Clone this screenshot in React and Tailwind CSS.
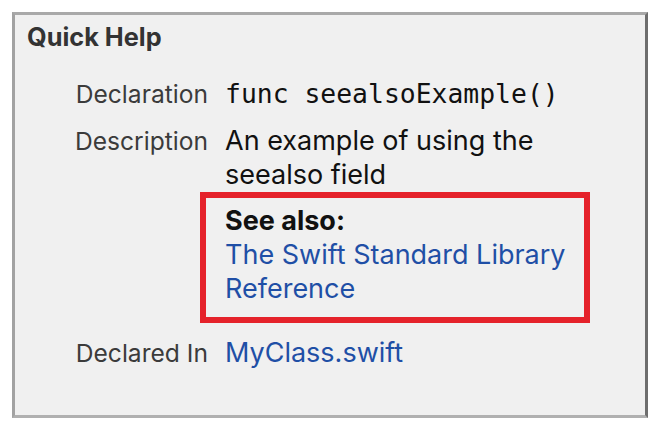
import React from 'react'

const sans = { fontFamily: 'Inter, "Liberation Sans", sans-serif' }
const mono = { fontFamily: '"DejaVu Sans Mono", monospace' }

// Label column: right-aligned, smaller grey text
const Label = ({ children }) => (
  <div className="text-right text-[24.6px] text-[#3b3b3b] pr-[17px]">{children}</div>
)

const App = () => {
  return (
    <div className="w-[660px] h-[430px] bg-white p-[12px]" style={sans}>
      <div className="h-[406px] bg-[#f0f0f0] border-[3px] border-t-[#a9a9a9] border-l-[#a2a2a2] border-r-[#6e6e6e] border-b-[#b0b0b0] leading-[34px]">
        {/* Title */}
        <div className="pl-[12px] pt-[5px] text-[25.3px] font-bold text-[#333333]">Quick Help</div>

        {/* Rows */}
        <div className="mt-[23px] grid grid-cols-[210px_1fr] items-baseline gap-y-[13px] text-[27px]">
          <Label>Declaration</Label>
          <div className="text-[#111111] text-[26.4px]" style={mono}>
            func seealsoExample()
          </div>

          <Label>Description</Label>
          <div className="text-[#111111]">
            <div>An example of using the</div>
            <div>seealso field</div>
            <div className="-ml-[25px] w-[390px] border-[6px] border-[#e5222b] pl-[19px] pt-[6px] pb-[11px]">
              <div className="font-bold">See also:</div>
              <div className="text-[#1f4fa6]">The Swift Standard Library</div>
              <div className="text-[#1f4fa6]">Reference</div>
            </div>
          </div>

          <Label>Declared In</Label>
          <div className="text-[#1f4fa6]">MyClass.swift</div>
        </div>
      </div>
    </div>
  )
}

export default App
